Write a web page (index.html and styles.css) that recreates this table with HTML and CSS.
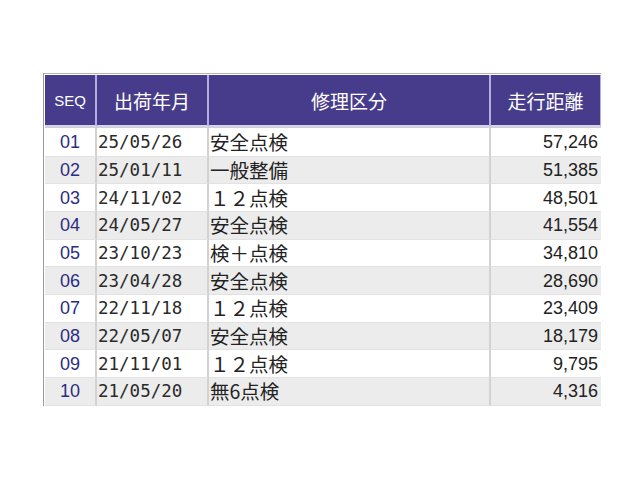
FILE: index.html
```html
<!DOCTYPE html>
<html lang="ja">
<head>
<meta charset="utf-8">
<title>履歴</title>
<link rel="stylesheet" href="styles.css">
</head>
<body>
<div class="page">
<table class="grid">
<thead>
<tr>
<th class="c-seq seq-h">SEQ</th>
<th class="c-date">出荷年月</th>
<th class="c-kind">修理区分</th>
<th class="c-dist">走行距離</th>
</tr>
</thead>
<tbody>
<tr class="first"><td class="c-seq">01</td><td class="c-date">25/05/26</td><td class="c-kind">安全点検</td><td class="c-dist">57,246</td></tr>
<tr class="alt"><td class="c-seq">02</td><td class="c-date">25/01/11</td><td class="c-kind">一般整備</td><td class="c-dist">51,385</td></tr>
<tr><td class="c-seq">03</td><td class="c-date">24/11/02</td><td class="c-kind">１２点検</td><td class="c-dist">48,501</td></tr>
<tr class="alt"><td class="c-seq">04</td><td class="c-date">24/05/27</td><td class="c-kind">安全点検</td><td class="c-dist">41,554</td></tr>
<tr><td class="c-seq">05</td><td class="c-date">23/10/23</td><td class="c-kind">検＋点検</td><td class="c-dist">34,810</td></tr>
<tr class="alt"><td class="c-seq">06</td><td class="c-date">23/04/28</td><td class="c-kind">安全点検</td><td class="c-dist">28,690</td></tr>
<tr><td class="c-seq">07</td><td class="c-date">22/11/18</td><td class="c-kind">１２点検</td><td class="c-dist">23,409</td></tr>
<tr class="alt"><td class="c-seq">08</td><td class="c-date">22/05/07</td><td class="c-kind">安全点検</td><td class="c-dist">18,179</td></tr>
<tr><td class="c-seq">09</td><td class="c-date">21/11/01</td><td class="c-kind">１２点検</td><td class="c-dist">9,795</td></tr>
<tr class="alt"><td class="c-seq">10</td><td class="c-date">21/05/20</td><td class="c-kind">無6点検</td><td class="c-dist">4,316</td></tr>
</tbody>
</table>
</div>
</body>
</html>
```

FILE: styles.css
```css
html, body {
  margin: 0;
  padding: 0;
  background: #ffffff;
}

.page {
  padding: 73px 0 0 43px;
}

.grid {
  border-collapse: separate;
  border-spacing: 0;
  table-layout: fixed;
  border-left: 1px solid #9a9a9a;
  border-top: 1px solid #b4b4b4;
  padding: 1px 0 0 1px;
  background: #ffffff;
}

.grid th,
.grid td {
  box-sizing: border-box;
  padding: 0;
  white-space: nowrap;
  vertical-align: middle;
}

.grid th {
  height: 52px;
  background: #473c8b;
  color: #ffffff;
  font-family: "Noto Sans CJK JP", sans-serif;
  font-weight: normal;
  font-size: 19px;
  text-align: center;
  border-right: 2px solid #b6aee0;
  border-bottom: 2px solid #d6d2ec;
}

.grid th.c-dist {
  border-right: 1px solid #b6aee0;
}

.grid th.seq-h {
  font-family: "Liberation Sans", Arial, sans-serif;
  font-size: 15px;
}

.c-seq { width: 52px; }
.c-date { width: 112px; }
.c-kind { width: 282px; }
.c-dist { width: 110px; }

.grid td {
  height: 27.7px;
  line-height: 24px;
  color: #222222;
  border-right: 2px solid #d2d2d2;
  border-bottom: 1px solid #e2e2e2;
}

.grid tr.first td {
  height: 29.5px;
  border-top: 1px solid #cfcfcf;
}

.grid td.c-dist {
  border-right: none;
  text-align: right;
  padding-right: 3px;
  font-family: "Liberation Sans", Arial, sans-serif;
  font-size: 18px;
}

.grid tr.alt td {
  background: #ececec;
}

.grid td.c-seq {
  text-align: center;
  color: #2c2c82;
  font-family: "Liberation Sans", Arial, sans-serif;
  font-size: 18px;
}

.grid td.c-date {
  font-family: "DejaVu Sans Mono", "Liberation Mono", monospace;
  font-size: 17.5px;
  color: #2a2a2a;
  padding-left: 1px;
}

.grid td.c-kind {
  font-family: "Noto Sans CJK JP", sans-serif;
  font-size: 19.5px;
  padding-left: 1px;
}
```
